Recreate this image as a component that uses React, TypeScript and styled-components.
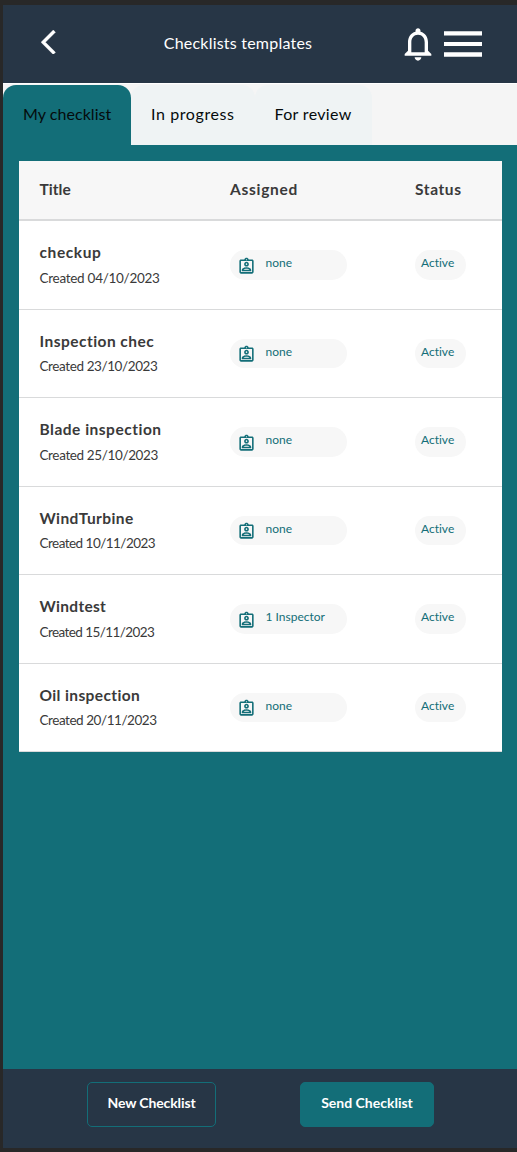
import React from 'react';
import styled, { createGlobalStyle } from 'styled-components';
import { MdOutlineAssignmentInd, MdNotificationsNone } from 'react-icons/md';

const GlobalStyle = createGlobalStyle`
  * { box-sizing: border-box; }
  body {
    margin: 0;
    background: #282828;
    font-family: Lato, "Liberation Sans", sans-serif;
    font-variant-ligatures: none;
    color: #3a3a3a;
  }
  button { font: inherit; cursor: pointer; }
`;

const Screen = styled.div`
  height: 1152px;
  padding: 5px 0 4px 3px;
  display: flex;
  flex-direction: column;
`;

const Header = styled.header`
  flex: none;
  height: 78px;
  padding: 0 35px 0 38px;
  background: #273646;
  color: #fff;
  display: grid;
  grid-template-columns: 37px 1fr 84px;
  align-items: center;
`;

const IconButton = styled.button`
  border: 0;
  padding: 0;
  background: none;
  color: inherit;
  display: flex;
`;

const BackButton = styled(IconButton)`
  margin-bottom: 4px;
`;

const PageTitle = styled.h1<{ $tracking: number }>`
  margin: 0 0 2px;
  text-align: center;
  white-space: nowrap;
  font-size: 16px;
  font-weight: 400;
  line-height: 20px;
  letter-spacing: ${(p) => p.$tracking}px;
`;

const HeaderActions = styled.div`
  display: flex;
  align-items: center;
  justify-content: flex-end;
  gap: 6px;
`;

const Tabs = styled.nav`
  flex: none;
  height: 62px;
  padding-top: 1px;
  border-top: 1px solid #fff;
  background: #f5f5f5;
  display: flex;
`;

const Tab = styled.button<{ $active?: boolean; $width: number; $tracking: number }>`
  width: ${(p) => p.$width}px;
  border: 0;
  padding: 0 0 3px 20px;
  border-radius: 13px 13px 0 0;
  background: ${(p) => (p.$active ? '#136e78' : '#eff3f4')};
  color: #050b0c;
  text-align: left;
  white-space: nowrap;
  && { font-size: 16px; }
  letter-spacing: ${(p) => p.$tracking}px;
`;

const Content = styled.main`
  flex: 1;
  background: #136e78;
  padding: 16px 15px 0 16px;
`;

const Table = styled.section`
  background: #fff;
`;

const Row = styled.div`
  display: grid;
  grid-template-columns: 190.5px 185px 1fr;
  align-items: center;
  height: 88.5px;
  padding-left: 20.5px;
  border-bottom: 1px solid #d9dadb;
`;

const HeadRow = styled(Row)`
  height: 60px;
  padding-bottom: 2px;
  background: #f7f7f7;
  border-bottom: 2px solid #d9dadb;
`;

const HeadCell = styled.div<{ $tracking: number }>`
  font-size: 15.5px;
  font-weight: 700;
  line-height: 20px;
  letter-spacing: ${(p) => p.$tracking}px;
`;

const TitleCell = styled.div`
  margin-bottom: 0.5px;
`;

const Name = styled.div<{ $tracking: number }>`
  font-size: 15.5px;
  font-weight: 700;
  line-height: 24px;
  white-space: nowrap;
  letter-spacing: ${(p) => p.$tracking}px;
`;

const Created = styled.div<{ $tracking: number }>`
  margin-top: 2.5px;
  font-size: 13.5px;
  line-height: 22px;
  white-space: nowrap;
  letter-spacing: ${(p) => p.$tracking}px;
`;

const Pill = styled.div<{ $width: number }>`
  width: ${(p) => p.$width}px;
  height: 29.5px;
  margin-top: 0.5px;
  padding: 0 6px;
  border-radius: 15px;
  background: #f7f7f7;
  color: #136e78;
  font-size: 12px;
  line-height: 26.5px;
  white-space: nowrap;
  display: flex;
  gap: 10px;
  svg { margin: 6.25px 0 0 0.5px; flex: none; }
`;

const Label = styled.span<{ $tracking: number }>`
  letter-spacing: ${(p) => p.$tracking}px;
`;

const Footer = styled.footer`
  flex: none;
  height: 79px;
  padding: 13px 83px 0 84px;
  background: #273646;
  display: flex;
  align-items: flex-start;
  justify-content: space-between;
`;

const Action = styled.button<{ $filled?: boolean; $width: number; $tracking: number }>`
  width: ${(p) => p.$width}px;
  height: 45px;
  padding: 0 0 4px;
  border: 1px solid #136e78;
  border-radius: 5px;
  background: ${(p) => (p.$filled ? '#136e78' : 'transparent')};
  color: #fff;
  && { font-size: 14px; font-weight: 700; }
  white-space: nowrap;
  letter-spacing: ${(p) => p.$tracking}px;
`;

const tabs = [
  { label: 'My checklist', width: 128, tracking: 0.05, active: true },
  { label: 'In progress', width: 123.5, tracking: 0.6 },
  { label: 'For review', width: 117, tracking: 0.33 },
];

const rows = [
  { name: 'checkup', nt: 0.6, date: '04/10/2023', dt: -0.28, assigned: 'none' },
  { name: 'Inspection chec', nt: 0.47, date: '23/10/2023', dt: -0.4, assigned: 'none' },
  { name: 'Blade inspection', nt: 0.5, date: '25/10/2023', dt: -0.37, assigned: 'none' },
  { name: 'WindTurbine', nt: 0.4, date: '10/11/2023', dt: -0.53, assigned: 'none' },
  { name: 'Windtest', nt: 0.3, date: '15/11/2023', dt: -0.58, assigned: '1 Inspector' },
  { name: 'Oil inspection', nt: 0.38, date: '20/11/2023', dt: -0.45, assigned: 'none' },
];

export default function App() {
  return (
    <>
      <GlobalStyle />
      <Screen>
        <Header>
          <BackButton aria-label="Back">
            <svg width="14.5" height="24.5" viewBox="0 2.1 11.67 19.8" fill="currentColor" stroke="currentColor" strokeWidth="0.3">
              <path d="M11.67 3.87 9.9 2.1 0 12l9.9 9.9 1.77-1.77L3.54 12z" />
            </svg>
          </BackButton>
          <PageTitle $tracking={0.22}>Checklists templates</PageTitle>
          <HeaderActions>
            <IconButton aria-label="Notifications">
              <MdNotificationsNone size={40} />
            </IconButton>
            <IconButton aria-label="Menu">
              <svg width="38" height="26" viewBox="0 0 38 26" fill="currentColor">
                <path d="M0 .3h38v4.3H0zM0 10.9h38v4.2H0zM0 21.3h38v4.4H0z" />
              </svg>
            </IconButton>
          </HeaderActions>
        </Header>
        <Tabs>
          {tabs.map((t) => (
            <Tab key={t.label} $active={t.active} $width={t.width} $tracking={t.tracking}>
              {t.label}
            </Tab>
          ))}
        </Tabs>
        <Content>
          <Table>
            <HeadRow>
              <HeadCell $tracking={0.05}>Title</HeadCell>
              <HeadCell $tracking={0.7}>Assigned</HeadCell>
              <HeadCell $tracking={0.6}>Status</HeadCell>
            </HeadRow>
            {rows.map((r) => (
              <Row key={r.name}>
                <TitleCell>
                  <Name $tracking={r.nt}>{r.name}</Name>
                  <Created $tracking={r.dt}>Created {r.date}</Created>
                </TitleCell>
                <Pill $width={117}>
                  <MdOutlineAssignmentInd size={19} />
                  <Label $tracking={0}>{r.assigned}</Label>
                </Pill>
                <Pill $width={51}>
                  <Label $tracking={0}>Active</Label>
                </Pill>
              </Row>
            ))}
          </Table>
        </Content>
        <Footer>
          <Action $width={129} $tracking={-0.12}>New Checklist</Action>
          <Action $width={134} $tracking={0} $filled>Send Checklist</Action>
        </Footer>
      </Screen>
    </>
  );
}
